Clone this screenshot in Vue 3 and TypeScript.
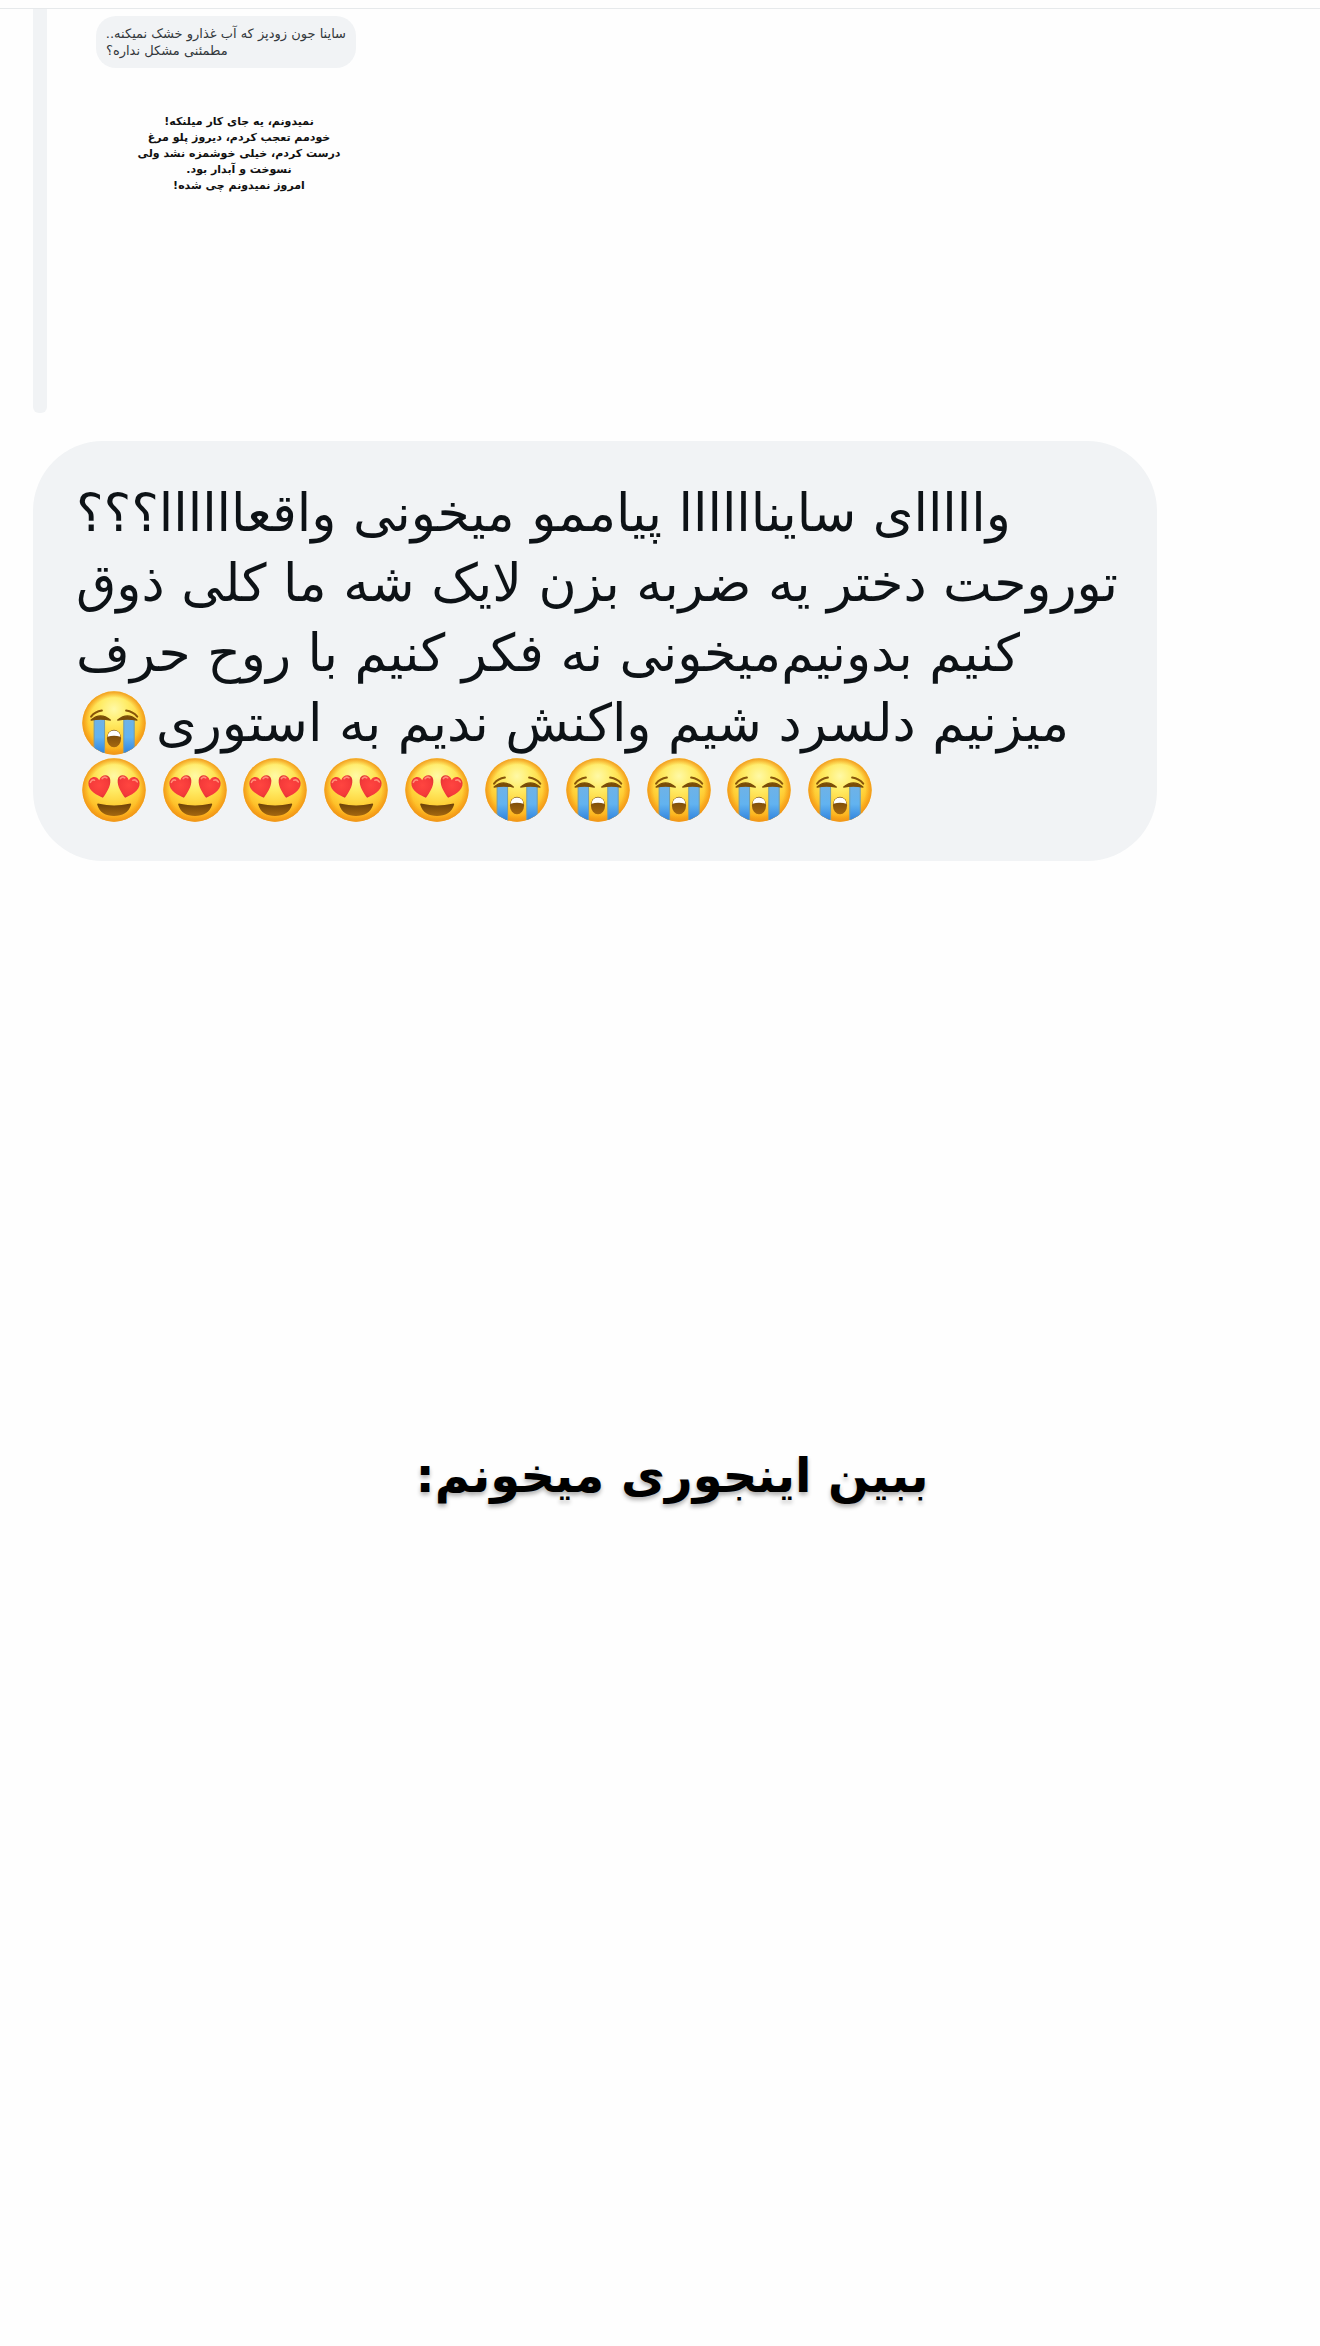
<script setup lang="ts">
type Face = 'sob' | 'love'

const quoteLines: string[] = [
  'ساینا جون زودپز که آب غذارو خشک نمیکنه..',
  'مطمئنی مشکل نداره؟',
]

const replyLines: string[] = [
  'نمیدونم، یه جای کار میلنکه!',
  'خودمم تعجب کردم، دیروز پلو مرغ',
  'درست کردم، خیلی خوشمزه نشد ولی',
  'نسوخت و آبدار بود.',
  'امروز نمیدونم چی شده!',
]

const messageLines: string[] = [
  'وااااای سایناااااا پیاممو میخونی واقعاااااا؟؟؟',
  'توروحت دختر یه ضربه بزن لایک شه ما کلی ذوق',
  'کنیم بدونیم‌میخونی نه فکر کنیم با روح حرف',
]

const faces: Face[] = [
  'love', 'love', 'love', 'love', 'love',
  'sob', 'sob', 'sob', 'sob', 'sob',
]

const labels: Record<Face, string> = { sob: '😭', love: '😍' }
</script>

<template>
  <main class="story">
    <svg class="defs" width="0" height="0" aria-hidden="true">
      <defs>
        <radialGradient id="skin" cx="50%" cy="28%" r="74%">
          <stop offset="0" stop-color="#fff9a6" />
          <stop offset="0.3" stop-color="#ffec66" />
          <stop offset="0.6" stop-color="#ffd23a" />
          <stop offset="0.85" stop-color="#fdb31e" />
          <stop offset="1" stop-color="#f39a12" />
        </radialGradient>
        <radialGradient id="rim">
          <stop offset="0.8" stop-color="#f59a14" stop-opacity="0" />
          <stop offset="1" stop-color="#f0951a" stop-opacity="0.9" />
        </radialGradient>
        <linearGradient id="tear" x1="0" y1="0" x2="0" y2="1">
          <stop offset="0" stop-color="#6fb2e6" />
          <stop offset="0.5" stop-color="#62b3f0" />
          <stop offset="1" stop-color="#2b7fdc" />
        </linearGradient>
        <linearGradient id="mouth" x1="0" y1="0" x2="0" y2="1">
          <stop offset="0" stop-color="#6d4208" />
          <stop offset="1" stop-color="#a5680f" />
        </linearGradient>
        <radialGradient id="heart" cx="50%" cy="45%" r="60%">
          <stop offset="0" stop-color="#ff4540" />
          <stop offset="0.7" stop-color="#f53a3a" />
          <stop offset="1" stop-color="#d8312f" />
        </radialGradient>
        <clipPath id="disc"><circle cx="95" cy="95" r="94" /></clipPath>
      </defs>
      <symbol id="face-sob" viewBox="0 0 190 190">
        <circle cx="95" cy="95" r="94" fill="url(#skin)" />
        <circle cx="95" cy="95" r="94" fill="url(#rim)" />
        <g clip-path="url(#disc)">
          <path d="M36 84H67V190H36Z" fill="url(#tear)" stroke="#719cab" stroke-width="3" />
          <path d="M124 84H155V190H124Z" fill="url(#tear)" stroke="#719cab" stroke-width="3" />
        </g>
        <path d="M27 76Q38 61 59 58M131 58Q152 61 164 76" fill="none" stroke="#87550a" stroke-width="6" stroke-linecap="round" />
        <path d="M27 86Q55 62 84 86Q55 80 27 86ZM106 86Q135 62 163 86Q135 80 106 86Z" fill="#7a4d08" stroke="#7a4d08" stroke-width="4" stroke-linejoin="round" />
        <ellipse cx="95" cy="141" rx="21" ry="26" fill="url(#mouth)" />
        <path d="M76 136Q77 118 95 117Q113 118 114 136Q95 130 76 136Z" fill="#fff" />
      </symbol>
      <symbol id="face-love" viewBox="0 0 190 190">
        <circle cx="95" cy="95" r="94" fill="url(#skin)" />
        <circle cx="95" cy="95" r="94" fill="url(#rim)" />
        <path d="M62 118C47 111 17 97 19 74C21 56 42 50 51 66C57 47 82 46 84 65C86 84 71 106 62 118Z" fill="url(#heart)" />
        <path d="M128 118C143 111 173 97 171 74C169 56 148 50 139 66C133 47 108 46 106 65C104 84 119 106 128 118Z" fill="url(#heart)" />
        <path d="M25 72Q29 63 37 66M60 61Q66 54 74 59M114 61Q119 54 127 59M151 66Q159 63 164 71" fill="none" stroke="#ff8d78" stroke-width="5" stroke-linecap="round" />
        <path d="M45 138Q45 134 51 136Q95 146 140 136Q146 134 146 138C139 162 120 172 95 172S52 162 45 138Z" fill="url(#mouth)" />
      </symbol>
    </svg>

    <section class="thread">
      <div class="quote">
        <div class="quote-bar"></div>
        <div class="quote-body">
          <div class="quote-bubble" dir="rtl">
            <p v-for="line in quoteLines" :key="line">{{ line }}</p>
          </div>
          <div class="reply" dir="rtl">
            <p v-for="line in replyLines" :key="line">{{ line }}</p>
          </div>
        </div>
      </div>

      <article class="bubble" dir="rtl">
        <p v-for="line in messageLines" :key="line" class="line">{{ line }}</p>
        <p class="line last">
          <span>میزنیم دلسرد شیم واکنش ندیم به استوری</span>
          <svg class="face" role="img" :aria-label="labels.sob"><use href="#face-sob" /></svg>
        </p>
        <div class="faces">
          <svg v-for="(face, i) in faces" :key="i" class="face" role="img" :aria-label="labels[face]">
            <use :href="'#face-' + face" />
          </svg>
        </div>
      </article>
    </section>

    <h1 class="caption" dir="rtl">ببین اینجوری میخونم:</h1>
  </main>
</template>

<style>
body {
  margin: 0;
  background: #fefefe;
}
</style>

<style scoped>
.story {
  padding-top: 8px;
  min-height: 100vh;
  box-sizing: border-box;
  font-family: "DejaVu Sans", sans-serif;
  color: #0d1216;
}
.defs {
  position: absolute;
}
p,
h1 {
  margin: 0;
  white-space: nowrap;
}
.thread {
  border-top: 1px solid #e6e9eb;
  padding: 0 33px;
}
.quote {
  display: flex;
  gap: 49px;
  height: 404px;
}
.quote-bar {
  width: 14px;
  border-radius: 0 0 6px 6px;
  background: #f1f3f5;
}
.quote-body {
  padding-top: 7px;
}
.quote-bubble {
  width: 260px;
  box-sizing: border-box;
  padding: 9px 10px;
  border-radius: 20px;
  background: #f1f3f5;
  font-size: 13px;
  line-height: 17px;
  text-align: left;
  color: #33383c;
}
.reply {
  width: 286px;
  margin-top: 46px;
  font-size: 11px;
  line-height: 16px;
  font-weight: 700;
  text-align: center;
  color: #111;
}
.bubble {
  width: fit-content;
  min-width: 1124px;
  box-sizing: border-box;
  margin-top: 28px;
  padding: 37px 32px 39px 43px;
  border-radius: 70px;
  background: #f1f3f5;
}
.line {
  height: 70px;
  font-size: 52px;
  line-height: 70px;
  text-align: left;
}
.last {
  display: flex;
  justify-content: flex-end;
  align-items: center;
  gap: 10px;
  padding-left: 6px;
}
.face {
  display: block;
  width: 64px;
  height: 64px;
  flex: none;
}
.faces {
  display: flex;
  justify-content: space-between;
  width: 790px;
  margin: 0 auto 0 6px;
  direction: ltr;
}
.caption {
  margin-top: 574px;
  padding-left: 24px;
  font-size: 48px;
  line-height: 80px;
  font-weight: 700;
  text-align: center;
  color: #000;
  text-shadow: 0 3px 4px rgba(0, 0, 0, 0.3);
}
</style>
